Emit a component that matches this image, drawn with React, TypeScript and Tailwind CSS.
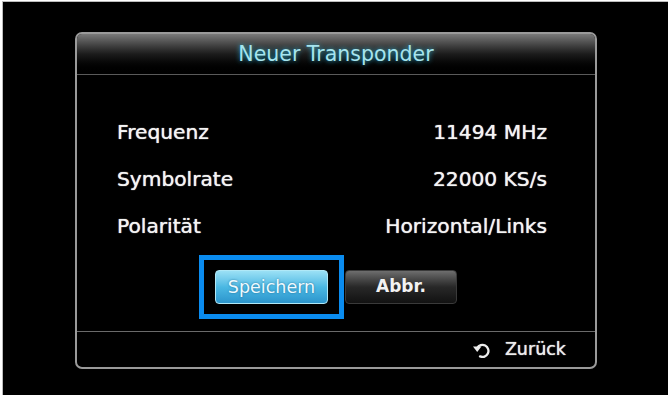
const rows = [
  { label: "Frequenz", value: "11494 MHz" },
  { label: "Symbolrate", value: "22000 KS/s" },
  { label: "Polarität", value: "Horizontal/Links" },
];

const BackIcon = () => (
  <svg width="18" height="16" viewBox="0 0 18 16" fill="none">
    <path
      d="M4.2 6 A6 6 0 1 1 7 14.4"
      stroke="#ececec"
      strokeWidth="2.3"
      strokeLinecap="round"
    />
    <path d="M0 4.6 L8.4 4.6 L4.2 10 Z" fill="#ececec" />
  </svg>
);

export default function App() {
  return (
    <div
      className="w-[672px] h-[400px] bg-white pl-[2px] pt-[1px]"
      style={{ fontFamily: "'DejaVu Sans', 'Noto Sans', sans-serif" }}
    >
      <div className="w-[666px] h-[394px] bg-black border-l border-t border-[#bcbcbc] pt-[30px] pl-[72px]">
        <div className="w-[522px] h-[337px] rounded-[7px] border-2 border-[#9a9a9a] flex flex-col overflow-hidden">
          {/* header */}
          <div className="h-[41px] shrink-0 bg-gradient-to-b from-[#7a7a7a] via-[#1c1c1c] to-black flex items-center justify-center border-b border-[#5a5a5a]">
            <span className="text-[20.5px] text-[#a6e4ee] [text-shadow:0_0_5px_rgba(40,190,230,0.9)]">
              Neuer Transponder
            </span>
          </div>

          {/* body */}
          <div className="flex-1 flex flex-col pt-[42px] pl-[40px] pr-[48px]">
            {rows.map((r) => (
              <div
                key={r.label}
                className="h-[47px] flex justify-between items-start text-[20.2px] text-[#f4f4f4] [text-shadow:0_0_1px_#ffffff]"
              >
                <span>{r.label}</span>
                <span>{r.value}</span>
              </div>
            ))}
            <div className="flex items-center ml-[82px] mt-[-3px] gap-[1px]">
              <div className="border-[5px] border-[#0a8cf0] px-[11px] py-[10px]">
                <div className="w-[113px] h-[34px] rounded-[4px] border border-[#b0e8f7] bg-gradient-to-b from-[#9ae0f5] via-[#4ab8e3] to-[#2c95cc] flex items-center justify-center text-[17.5px] text-[#eefaff] [text-shadow:0_0_2px_rgba(0,60,100,0.6)]">
                  Speichern
                </div>
              </div>
              <div className="w-[112px] h-[34px] rounded-[4px] border border-[#3a3a3a] bg-gradient-to-b from-[#6e6e6e] via-[#282828] to-[#121212] flex items-center justify-center text-[17px] font-bold text-[#f2f2f2]">
                Abbr.
              </div>
            </div>
          </div>

          {/* footer */}
          <div className="h-[36px] shrink-0 border-t border-[#6a6a6a] flex items-center justify-end pr-[29px] gap-[14px]">
            <BackIcon />
            <span className="text-[17.5px] text-[#ececec] [text-shadow:0_0_1px_#ffffff]">Zurück</span>
          </div>
        </div>
      </div>
    </div>
  );
}
